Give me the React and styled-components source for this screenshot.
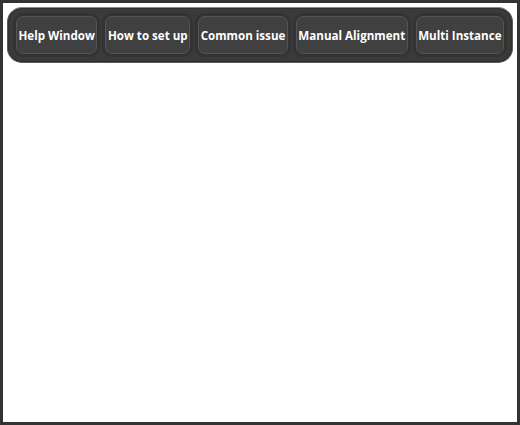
import React from "react";
import styled, { createGlobalStyle } from "styled-components";

const GlobalStyle = createGlobalStyle`
  html, body {
    margin: 0;
    padding: 0;
    background: #ffffff;
  }
  * {
    box-sizing: border-box;
  }
`;

const tabs = [
  "Help Window",
  "How to set up",
  "Common issue",
  "Manual Alignment",
  "Multi Instance",
];

export default function App() {
  return (
    <>
      <GlobalStyle />
      <Window>
        <Toolbar>
          {tabs.map((label) => (
            <TabButton key={label}>
              <TabInner>{label}</TabInner>
            </TabButton>
          ))}
        </Toolbar>
      </Window>
    </>
  );
}

const Window = styled.div`
  width: 520px;
  height: 425px;
  border: 3px solid #333333;
  background: #ffffff;
  padding: 4px;
  font-family: "Open Sans", "Noto Sans", sans-serif;
`;

const Toolbar = styled.div`
  display: flex;
  gap: 2px;
  height: 56px;
  padding: 5px;
  background: #3a3a3a;
  border: 1px solid #5a5a5a;
  border-top-color: #8a8a8a;
  border-radius: 15px;
  box-shadow: inset 0 0 0 1px #2e2e2e;
`;

const TabButton = styled.button`
  flex: 1 1 auto;
  min-width: 0;
  display: flex;
  padding: 0;
  height: 44px;
  border: 3px solid #333333;
  border-radius: 10px;
  background: #333333;
  cursor: pointer;
`;

const TabInner = styled.span`
  flex: 1;
  display: flex;
  align-items: center;
  justify-content: center;
  padding: 0 1px;
  border: 1px solid #555555;
  border-radius: 7px;
  background: #404040;
  color: #ffffff;
  font-family: "Open Sans", "Noto Sans", sans-serif;
  font-size: 11.6px;
  font-weight: 700;
  white-space: nowrap;
`;
